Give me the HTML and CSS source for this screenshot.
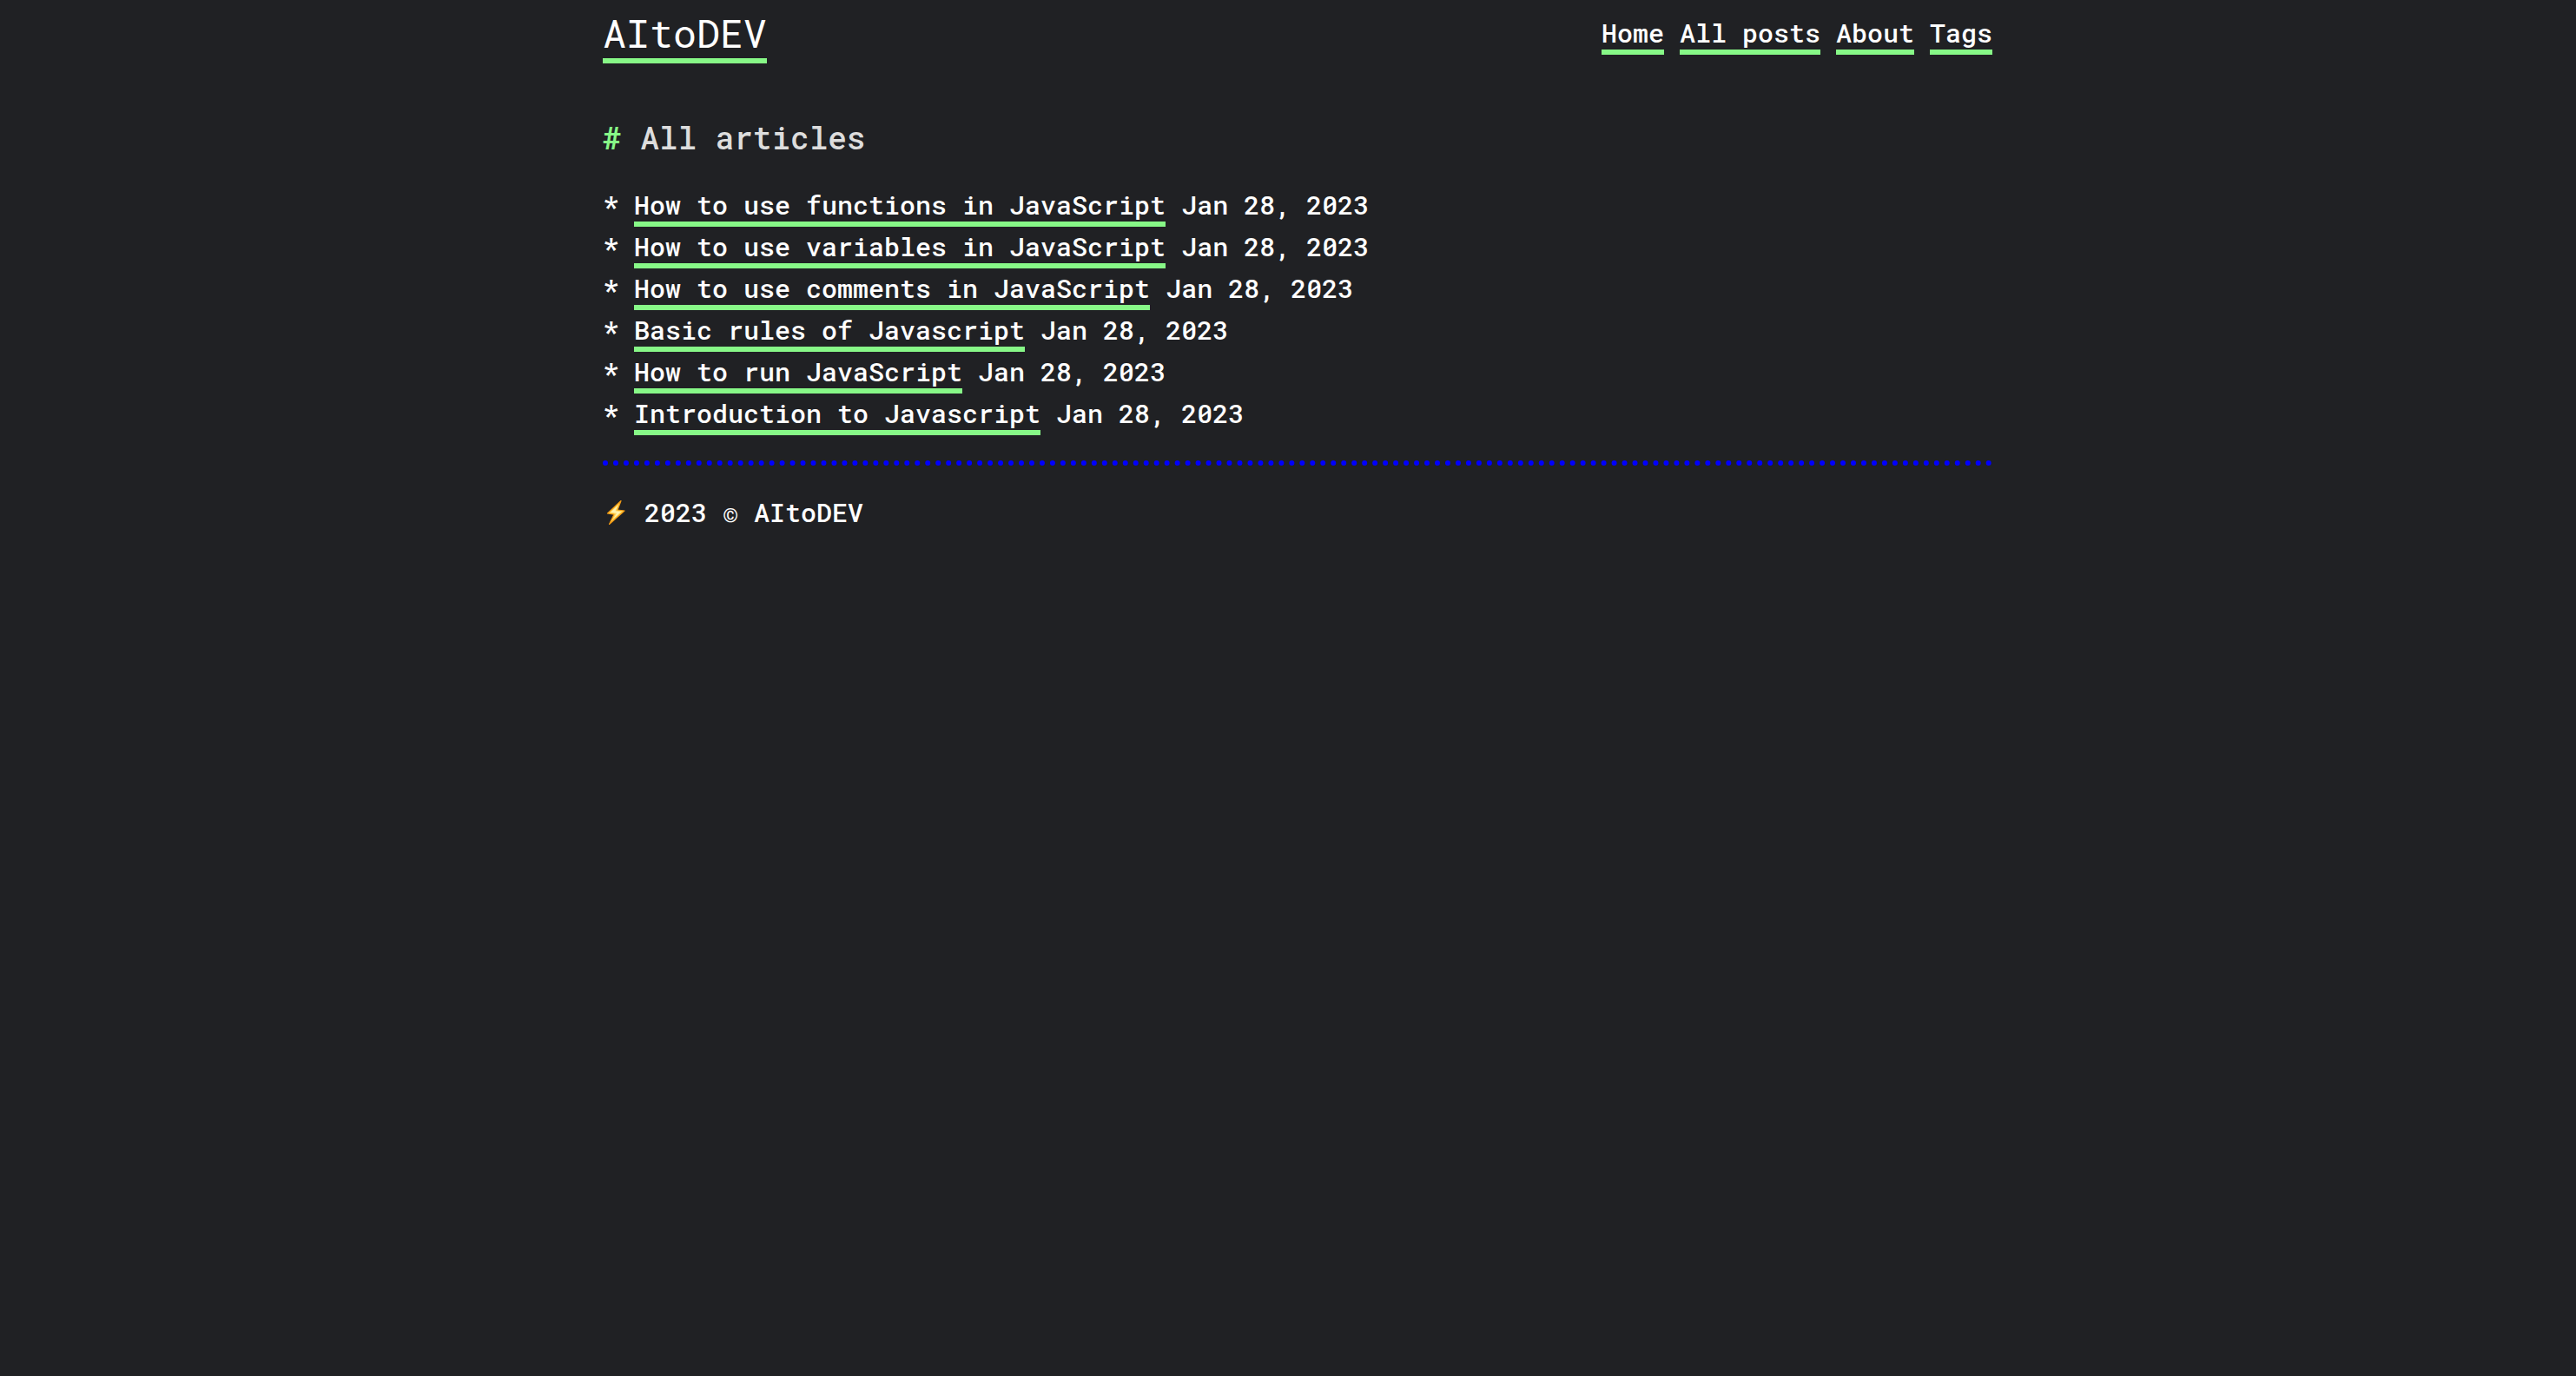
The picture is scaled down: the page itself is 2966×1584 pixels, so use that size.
FILE: index.html
```
<!DOCTYPE html>
<html lang="en">
<head>
    <meta charset="UTF-8">
    <meta name="viewport" content="width=device-width, initial-scale=1.0">
    <title>All articles - AItoDEV</title>
    <link rel="stylesheet" href="styles.css">
</head>
<body>
    <div class="container">
        <header class="header">
            <div class="logo"><a href="#">AItoDEV</a></div>
            <nav>
                <a href="#">Home</a>
                <a href="#">All posts</a>
                <a href="#">About</a>
                <a href="#">Tags</a>
            </nav>
        </header>

        <main>
            <h1>All articles</h1>
            <ul class="posts">
                <li><a href="#">How to use functions in JavaScript</a> <time datetime="2023-01-28">Jan 28, 2023</time></li>
                <li><a href="#">How to use variables in JavaScript</a> <time datetime="2023-01-28">Jan 28, 2023</time></li>
                <li><a href="#">How to use comments in JavaScript</a> <time datetime="2023-01-28">Jan 28, 2023</time></li>
                <li><a href="#">Basic rules of Javascript</a> <time datetime="2023-01-28">Jan 28, 2023</time></li>
                <li><a href="#">How to run JavaScript</a> <time datetime="2023-01-28">Jan 28, 2023</time></li>
                <li><a href="#">Introduction to Javascript</a> <time datetime="2023-01-28">Jan 28, 2023</time></li>
            </ul>
        </main>

        <footer class="footer">
            <svg class="bolt" viewBox="0 0 30 34" aria-hidden="true">
                <path d="M21 3.5 L5.5 18 L13 19.2 L7.5 30.5 L25 15 L17 14 Z" fill="#ffd75a" stroke="#f39a12" stroke-width="1.2" stroke-linejoin="round"/>
                <path d="M17.5 8.5 L9 16.8 L16 17.8 L12.5 24 L21 16 L14.5 15.2 Z" fill="#fff3b0"/>
            </svg>
            <span>2023 © AItoDEV</span>
        </footer>
    </div>
</body>
</html>
```
FILE: styles.css
```
body {
    margin: 0;
    padding-left: 22px;
    background-color: #202124;
    color: #fff;
    font-family: "Roboto Mono", "DejaVu Sans Mono", monospace;
    font-size: 30px;
    font-weight: 500;
    line-height: 48px;
}
.container {
    max-width: 1600px;
    margin: 0 auto;
}
a {
    color: #fff;
    text-decoration: none;
    border-bottom: 6px solid #87f887;
}
.header {
    display: flex;
    justify-content: space-between;
    padding: 14px 0;
}
.logo {
    font-size: 45px;
    font-weight: 400;
}
h1 {
    margin: 58px 0 30px;
    color: #ddd;
    font-size: 36px;
    font-weight: 500;
}
h1::before {
    content: "# ";
    color: #87f887;
    font-weight: 700;
}
.posts {
    margin: 0;
    padding: 0;
    list-style: none;
}
.posts li::before {
    content: "* ";
    font-weight: 700;
}
.footer {
    display: flex;
    align-items: center;
    gap: 18px;
    margin-top: 30px;
    padding-top: 30px;
    border-top: 6px dotted blue;
}
.bolt {
    width: 30px;
    height: 34px;
}
```
